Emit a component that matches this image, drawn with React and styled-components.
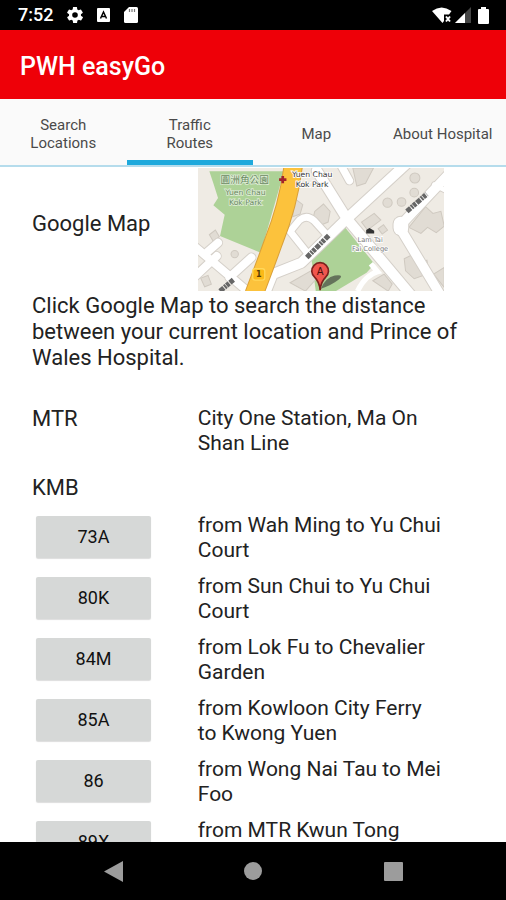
import React, { useState } from 'react'
import styled, { createGlobalStyle } from 'styled-components'

const GlobalStyle = createGlobalStyle`
  * {
    box-sizing: border-box;
  }

  body {
    margin: 0;
    background: #fff;
    color: #222;
    font-family: Roboto, "Liberation Sans", sans-serif;
  }
`

const Screen = styled.div`
  display: flex;
  flex-direction: column;
  height: 100vh;
`

const StatusBar = styled.div`
  display: flex;
  align-items: center;
  justify-content: space-between;
  flex: none;
  height: 30px;
  padding: 0 17px 0 18px;
  background: #000;
  color: #fff;

  svg {
    display: block;
  }
`

const StatusGroup = styled.div`
  display: flex;
  align-items: center;
  gap: ${props => props.$gap}px;
`

const Clock = styled.span`
  font-size: 18px;
  font-weight: 500;
  line-height: 20px;
`

const AppBar = styled.header`
  display: flex;
  align-items: center;
  flex: none;
  height: 69px;
  padding: 4px 20px 0;
  background: #ee0008;
  color: #fff;
`

const AppTitle = styled.h1`
  margin: 0;
  font-size: 25px;
  font-weight: 500;
  line-height: 30px;
`

const Tabs = styled.nav`
  display: grid;
  grid-template-columns: repeat(4, 1fr);
  flex: none;
  height: 68px;
  background: #fafafa;
  border-bottom: 2px solid #b5dcec;
`

const Tab = styled.button`
  padding: 8px 0 0;
  border: 0;
  border-bottom: 5px solid ${props => (props.$active ? '#1ea9dc' : 'transparent')};
  background: none;
  color: #4a4a4a;
  font-family: inherit;
  font-size: 15px;
  line-height: 18px;
  white-space: pre-line;
  cursor: pointer;
`

const Content = styled.main`
  flex: 1;
  min-height: 0;
  overflow-y: auto;
  scrollbar-width: none;
  padding: 1px 32px 0;
  font-size: 22px;
  line-height: 25px;
`

// label on the left, details on the right
const Row = styled.div`
  display: grid;
  grid-template-columns: 3fr 5fr;
  align-items: ${props => (props.$top ? 'start' : 'center')};
`

const MapLink = styled.a`
  display: block;
  margin-right: 30px;

  svg {
    display: block;
    width: 100%;
  }
`

const Label = styled.h2`
  margin: 0;
  font-size: 22px;
  font-weight: 400;
  line-height: 25px;
`

const MapLabel = styled(Label)`
  padding-bottom: 12px;
`

const Details = styled.p`
  margin: 0;
  padding-right: 30px;
  font-size: 21px;
  line-height: 25px;
`

const Intro = styled.p`
  margin: 2px 0 35px;
  line-height: 26px;
`

const Operator = styled(Label)`
  margin: 19px 0 13px;
`

const RouteList = styled.div`
  display: grid;
  gap: 11px;
`

const RouteRow = styled(Row)`
  min-height: 50px;
`

const RouteButton = styled.button`
  width: 115px;
  height: 42px;
  margin: 3px 4px;
  padding: 0;
  border: 0;
  border-radius: 2px;
  background: #d6d8d7;
  box-shadow: 0 1px 1px #ddd;
  color: #111;
  font-family: inherit;
  font-size: 18px;
  line-height: 20px;
  cursor: pointer;
`

const NavBar = styled.footer`
  display: grid;
  grid-template-columns: repeat(3, 140px);
  justify-content: center;
  flex: none;
  height: 58px;
  background: #000;
`

const NavButton = styled.button`
  display: flex;
  align-items: center;
  justify-content: center;
  padding: 0;
  border: 0;
  background: none;
  color: #9c9c9c;
  cursor: pointer;
`

const tabs = ['Search\nLocations', 'Traffic\nRoutes', 'Map', 'About Hospital']

const routes = [
  { number: '73A', path: 'from Wah Ming to Yu Chui Court' },
  { number: '80K', path: 'from Sun Chui to Yu Chui Court' },
  { number: '84M', path: 'from Lok Fu to Chevalier Garden' },
  { number: '85A', path: 'from Kowloon City Ferry to Kwong Yuen' },
  { number: '86', path: 'from Wong Nai Tau to Mei Foo' },
  { number: '89X', path: 'from MTR Kwun Tong' },
]

const GearIcon = () => (
  <svg width="16" height="16" viewBox="2 2 20 20" fill="currentColor">
    <path
      fillRule="evenodd"
      d="M19.4 13a7.5 7.5 0 0 0 0-2l2.1-1.6a.5.5 0 0 0 .1-.7l-2-3.4a.5.5 0 0 0-.6-.2l-2.5 1a7 7 0 0 0-1.7-1L14.5 2.4a.5.5 0 0 0-.5-.4h-4a.5.5 0 0 0-.5.4l-.4 2.7a7 7 0 0 0-1.7 1l-2.5-1a.5.5 0 0 0-.6.2l-2 3.4a.5.5 0 0 0 .1.7L4.6 11a7.5 7.5 0 0 0 0 2l-2.1 1.6a.5.5 0 0 0-.1.7l2 3.4c.1.2.4.3.6.2l2.5-1a7 7 0 0 0 1.7 1l.4 2.7c0 .2.2.4.5.4h4c.2 0 .5-.2.5-.4l.4-2.7a7 7 0 0 0 1.7-1l2.5 1c.2.1.5 0 .6-.2l2-3.4a.5.5 0 0 0-.1-.7zM12 15.5a3.5 3.5 0 1 1 0-7 3.5 3.5 0 0 1 0 7z"
    />
  </svg>
)

const KeyboardIcon = () => (
  <svg width="13" height="14" viewBox="0 0 13 14">
    <rect width="13" height="14" rx="1" fill="#fff" />
    <path d="M3.5 10.5 6.5 4l3 6.5M5 8.5h3" fill="none" stroke="#000" strokeWidth="1.5" />
  </svg>
)

const SdCardIcon = () => (
  <svg width="14" height="16" viewBox="0 0 14 16">
    <path d="M5 0h7.5Q14 0 14 1.5v13q0 1.5-1.5 1.5h-11Q0 16 0 14.5V5z" fill="#fff" />
    <path d="M5.5 2v3M8 2v3M10.5 2v3" stroke="#777" strokeWidth="1.2" />
  </svg>
)

const WifiIcon = () => (
  <svg width="20" height="17" viewBox="0 0 20 17">
    <path d="M0 4Q9.5-3 19.5 4L17 7.500h-5V14l-1.500 2z" fill="#fff" />
    <path d="m14 9.5 4 5M18 9.5l-4 5" stroke="#fff" strokeWidth="2" />
  </svg>
)

const SignalIcon = () => (
  <svg width="16" height="16" viewBox="0 0 16 16">
    <path d="M16 0v16H0z" fill="#444" />
    <path d="M10 6v10H0z" fill="#fff" />
  </svg>
)

const BatteryIcon = () => (
  <svg width="15" height="17" viewBox="-4 0 15 17" fill="#fff">
    <path d="M3 0h5v2h2q1 0 1 1v13q0 1-1 1H1q-1 0-1-1V3q0-1 1-1h2z" />
  </svg>
)

const StreetMap = () => (
  <svg viewBox="16 12 738 369" role="img" aria-label="Street map" fontFamily='"DejaVu Sans", "Noto Sans CJK TC", sans-serif'>
    <rect x="16" y="12" width="738" height="369" fill="#efebe4" />

    {/* parks */}
    <g fill="#add297">
      <path d="M50 22h224L204 266 82 216l14-64-34-28 14-22-14-44z" />
      <path d="m457 190 88 110-24 26-92 55h-60l-14-104z" />
    </g>

    {/* buildings */}
    <g fill="#e1dcd4" stroke="#cfc9c0" strokeWidth="3">
      <path d="m366 142 26-22 20 22-6 32-24 10-22-18zM506 174l38-26 20 20-40 30zM556 194l16-12 12 16-16 12z" />
      <path d="m306 104 24 18-8 28-22 8zM292 356l70-40 14 22-38 43zM540 350l34-20 24 30-12 21z" />
      <path d="m480 12 62 0-24 46-26 8zM648 190l50-62 22 20 24-6 10 44-24 20-26-16-20 18zM634 284l36-18 12 30 20-8 6 40-44 16-26-24zM722 330l32-20v60z" />
      <circle cx="584" cy="116" r="14" />
      <circle cx="626" cy="114" r="13" />
      <circle cx="666" cy="42" r="15" />
      <circle cx="664" cy="86" r="13" />
      <circle cx="126" cy="270" r="11" />
      <path d="m50 212 18-14 12 20-18 14zM24 342l22-8 10 26-20 8z" />
    </g>

    {/* streets: outline first, white on top */}
    {[['#d5d0c9', 6], ['#fff', 0]].map(([color, extra]) => (
      <g key={color} fill="none" stroke={color} strokeLinecap="round" strokeLinejoin="round">
        <path d="M372 20 462 164 660 400M640 0 462 164 326 296 240 330 216 390" strokeWidth={30 + extra} />
        <path d="m440-4 30 54" strokeWidth={22 + extra} />
        <path d="m292 202 28-34q22-18 44 2l38 42M292 202l56 70" strokeWidth={20 + extra} />
        <path d="m764 34-134 142 0 30 112 186" strokeWidth={28 + extra} />
        <path d="M624 180v12" strokeWidth={44 + extra} />
        <path d="m0 242 170 144M0 344l72-68M76 236l-32 28M110 340l66-60" strokeWidth={24 + extra} />
        <path d="m764 82-40-20" strokeWidth={14 + extra} />
      </g>
    ))}
    <path d="M494 381q24-48 60-58l-20-24" fill="none" stroke="#fff" strokeWidth="16" />

    {/* highway */}
    <path d="M302 0Q288 120 242 234 222 290 184 390" fill="none" stroke="#d9a03a" strokeWidth="58" />
    <path d="M302 0Q288 120 242 234 222 290 184 390" fill="none" stroke="#fcc23c" strokeWidth="52" />
    <rect x="180" y="314" width="36" height="34" rx="7" fill="#fbb917" stroke="#ffd75a" strokeWidth="4" />
    <text x="198" y="340" textAnchor="middle" fontSize="24" fontWeight="700" fill="#553c08">1</text>

    {/* street name marks */}
    <g stroke="#666" strokeWidth="15" strokeDasharray="15 3 6 2 10 3">
      <path d="m342 280 68-68" />
      <path d="m642 142 60-52" />
      <path d="m82 381 40-34" />
    </g>

    {/* place names */}
    <g textAnchor="middle" paintOrder="stroke" stroke="#fff" strokeWidth="5">
      <g fill="#6a8a62" stroke="#dcebd3" fontSize="23">
        <text x="156" y="58" fontSize="29">圓洲角公園</text>
        <text x="158" y="94">Yuen Chau</text>
        <text x="158" y="123">Kok Park</text>
      </g>
      <g fill="#333" fontSize="23">
        <text x="358" y="39">Yuen Chau</text>
        <text x="358" y="68">Kok Park</text>
      </g>
      <g fill="#777" fontSize="20">
        <text x="532" y="234">Lam Tai</text>
        <text x="532" y="260">Fai College</text>
      </g>
    </g>
    <path d="M270 36v22M259 47h22" stroke="#a3242c" strokeWidth="8" />
    <path d="M520 208v-10l10-6 14 8v8z" fill="#333" />

    {/* marker */}
    <path d="M384 374q14-34 42-40 30-4 12 12-20 16-54 28z" fill="#333" opacity="0.6" />
    <path d="M382 378q-2-24-16-38a25 25 0 1 1 32 0q-14 14-16 38z" fill="#f0564e" stroke="#7c211e" strokeWidth="5" />
    <text x="382" y="332" textAnchor="middle" fontSize="30" fill="#4a0f0d">A</text>
  </svg>
)

const App = () => {
  const [active, setActive] = useState(1)

  return (
    <Screen>
      <GlobalStyle />
      <StatusBar>
        <StatusGroup $gap={14}>
          <Clock>7:52</Clock>
          <GearIcon />
          <KeyboardIcon />
          <SdCardIcon />
        </StatusGroup>
        <StatusGroup $gap={3}>
          <WifiIcon />
          <SignalIcon />
          <BatteryIcon />
        </StatusGroup>
      </StatusBar>

      <AppBar>
        <AppTitle>PWH easyGo</AppTitle>
      </AppBar>

      <Tabs>
        {tabs.map((name, i) => (
          <Tab key={name} $active={i === active} onClick={() => setActive(i)}>
            {name}
          </Tab>
        ))}
      </Tabs>

      <Content>
        <Row>
          <MapLabel>Google Map</MapLabel>
          <MapLink href="#map">
            <StreetMap />
          </MapLink>
        </Row>
        <Intro>
          Click Google Map to search the distance between your current location and Prince of Wales Hospital.
        </Intro>

        <Row $top>
          <Label>MTR</Label>
          <Details>City One Station, Ma On Shan Line</Details>
        </Row>

        <Operator>KMB</Operator>
        <RouteList>
          {routes.map(route => (
            <RouteRow key={route.number} $top>
              <RouteButton>{route.number}</RouteButton>
              <Details>{route.path}</Details>
            </RouteRow>
          ))}
        </RouteList>
      </Content>

      <NavBar>
        <NavButton aria-label="Back">
          <svg width="19" height="21" viewBox="0 0 19 21" fill="currentColor">
            <path d="M19 0v21L0 10.5z" />
          </svg>
        </NavButton>
        <NavButton aria-label="Home">
          <svg width="18" height="18" viewBox="0 0 18 18" fill="currentColor">
            <circle cx="9" cy="9" r="9" />
          </svg>
        </NavButton>
        <NavButton aria-label="Overview">
          <svg width="19" height="19" viewBox="0 0 19 19" fill="currentColor">
            <rect width="19" height="19" rx="1" />
          </svg>
        </NavButton>
      </NavBar>
    </Screen>
  )
}

export default App
